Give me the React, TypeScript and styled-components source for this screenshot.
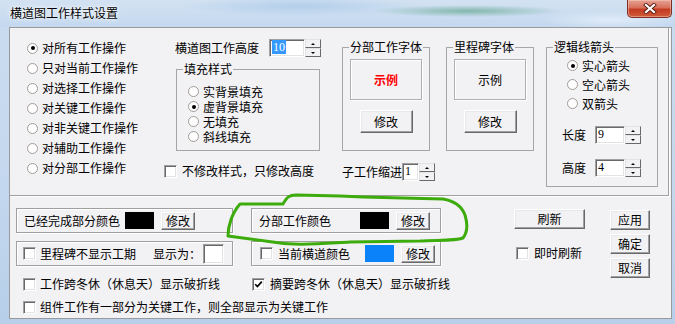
import styled, { createGlobalStyle } from "styled-components";

const GlobalStyle = createGlobalStyle`
  html, body {
    margin: 0;
    padding: 0;
  }
  body {
    font-family: "Noto Sans CJK SC", "Liberation Sans", sans-serif;
    font-size: 12px;
    color: #000;
  }
`;

const FACE = "#f2f1f4";

const Radio = ({ label, on, h = 20 }: { label: string; on?: boolean; h?: number }) => (
  <RadioRow $h={h}>
    <RadioDot $on={on} />
    <Text>{label}</Text>
  </RadioRow>
);

const Check = ({ label, on, gap = 4 }: { label: string; on?: boolean; gap?: number }) => (
  <CheckItem $gap={gap}>
    <CheckBox>
      {on && (
        <svg width="11" height="11" viewBox="0 0 11 11">
          <path d="M2.2 5.2 L4.4 7.6 L8.8 2.6" fill="none" stroke="#000" strokeWidth="1.7" />
        </svg>
      )}
    </CheckBox>
    <Text>{label}</Text>
  </CheckItem>
);

const SpinEdit = ({ value, w, selected }: { value: string; w: number; selected?: boolean }) => (
  <SpinWrap>
    <EditBox $w={w}>{selected ? <Selected>{value}</Selected> : value}</EditBox>
    <SpinCol>
      <SpinBtn $up />
      <SpinBtn />
    </SpinCol>
  </SpinWrap>
);

const ColorBox = ({ label, color, w, pad = 7, check }: { label: string; color: string; w: number; pad?: number; check?: boolean }) => (
  <Etched $w={w} $pad={pad}>
    {check && <CheckBox style={{ marginRight: 5 }} />}
    <Text style={{ width: check ? 82 : 96 }}>{label}</Text>
    <Swatch $color={color} />
    <Btn $w={34} $h={18} style={{ marginLeft: 7 }}>修改</Btn>
  </Etched>
);

const App = () => {
  return (
    <>
      <GlobalStyle />
      <Window>
        <TitleBar>
          <Title>横道图工作样式设置</Title>
          <CloseButton>
            <svg width="14" height="11" viewBox="0 0 14 11">
              <path d="M3 2 L11 9 M11 2 L3 9" stroke="#5a1e14" strokeWidth="4" strokeLinecap="square" />
              <path d="M3 2 L11 9 M11 2 L3 9" stroke="#fff" strokeWidth="2.2" strokeLinecap="square" />
            </svg>
          </CloseButton>
        </TitleBar>
        <Middle>
          <SideFrame />
          <Client>
            <UpperPanel>
              <RadioList>
                <Radio label="对所有工作操作" on />
                <Radio label="只对当前工作操作" />
                <Radio label="对选择工作操作" />
                <Radio label="对关键工作操作" />
                <Radio label="对非关键工作操作" />
                <Radio label="对辅助工作操作" />
                <Radio label="对分部工作操作" />
              </RadioList>

              <Column $w={156} $ml={0}>
                <FieldRow $pl={11}>
                  <Text style={{ width: 94 }}>横道图工作高度</Text>
                  <SpinEdit value="10" w={36} selected />
                </FieldRow>
                <Group $w={144} $h={90} style={{ marginTop: 3, marginLeft: 12 }}>
                  <Legend>填充样式</Legend>
                  <GroupBody $pt={7} $pl={11}>
                    <Radio label="实背景填充" h={15} />
                    <Radio label="虚背景填充" h={15} on />
                    <Radio label="无填充" h={15} />
                    <Radio label="斜线填充" h={15} />
                  </GroupBody>
                </Group>
                <FieldRow style={{ marginTop: 10 }}>
                  <Check label="不修改样式，只修改高度" gap={5} />
                </FieldRow>
              </Column>

              <Column $w={94} $ml={22} $pt={11}>
                <Group $w={88} $h={112}>
                  <Legend>分部工作字体</Legend>
                  <FontBody>
                    <Preview $red>示例</Preview>
                    <Btn $w={53} $h={23} style={{ marginTop: 10 }}>修改</Btn>
                  </FontBody>
                </Group>
                <FieldRow style={{ marginTop: 11 }}>
                  <Text style={{ width: 60 }}>子工作缩进</Text>
                  <SpinEdit value="1" w={17} />
                </FieldRow>
              </Column>

              <Column $w={88} $ml={10} $pt={11}>
                <Group $w={88} $h={112}>
                  <Legend>里程碑字体</Legend>
                  <FontBody>
                    <Preview>示例</Preview>
                    <Btn $w={53} $h={23} style={{ marginTop: 10 }}>修改</Btn>
                  </FontBody>
                </Group>
              </Column>

              <Column $w={112} $ml={12} $pt={11}>
                <Group $w={112} $h={148}>
                  <Legend>逻辑线箭头</Legend>
                  <GroupBody $pt={1} $pl={20}>
                    <Radio label="实心箭头" h={19} on />
                    <Radio label="空心箭头" h={19} />
                    <Radio label="双箭头" h={19} />
                  </GroupBody>
                  <GroupBody $pt={12} $pl={15}>
                    <FieldRow>
                      <Text style={{ width: 33 }}>长度</Text>
                      <SpinEdit value="9" w={30} />
                    </FieldRow>
                    <FieldRow style={{ marginTop: 13 }}>
                      <Text style={{ width: 33 }}>高度</Text>
                      <SpinEdit value="4" w={30} />
                    </FieldRow>
                  </GroupBody>
                </Group>
              </Column>
            </UpperPanel>

            <Lower>
              <LeftArea>
                <BoxRow>
                  <ColorBox label="已经完成部分颜色" color="#000" w={217} />
                  <ColorBox label="分部工作颜色" color="#000" w={190} />
                </BoxRow>
                <BoxRow style={{ marginTop: 8 }}>
                  <Etched $w={217} $pad={6}>
                    <Check label="里程碑不显示工期" />
                    <Text style={{ marginLeft: 17, width: 50 }}>显示为：</Text>
                    <EditBox $w={21} $h={20} />
                  </Etched>
                  <ColorBox label="当前横道颜色" color="#0a82fa" w={190} pad={8} check />
                </BoxRow>
                <PlainRow style={{ marginTop: 8 }}>
                  <CheckSlot $w={229}>
                    <Check label="工作跨冬休（休息天）显示破折线" />
                  </CheckSlot>
                  <Check label="摘要跨冬休（休息天）显示破折线" on gap={5} />
                </PlainRow>
                <PlainRow style={{ marginTop: 3 }}>
                  <CheckSlot $w={400}>
                    <Check label="组件工作有一部分为关键工作，则全部显示为关键工作" />
                  </CheckSlot>
                </PlainRow>
              </LeftArea>
              <RefreshCol>
                <Btn $w={71} $h={20}>刷新</Btn>
                <PlainRow style={{ marginTop: 14, paddingLeft: 2 }}>
                  <Check label="即时刷新" gap={5} />
                </PlainRow>
              </RefreshCol>
              <ButtonCol>
                <Btn $w={40} $h={20}>应用</Btn>
                <Btn $w={40} $h={20}>确定</Btn>
                <Btn $w={40} $h={20}>取消</Btn>
              </ButtonCol>
            </Lower>
          </Client>
        </Middle>

        <Annotation width="675" height="324" viewBox="0 0 675 324">
          <path
            d="M240 204 L283 204 C287 197 289 195 296 195 L340 196 L363 197 L443 199 C455 201 462 207 465 215 C468 225 467 233 463 238 C455 241 440 240 420 241 L350 242 C330 243 300 246 280 243 L228 236 C228 226 232 213 240 204 Z"
            fill="none"
            stroke="#3cab0c"
            strokeWidth="3"
            strokeLinejoin="round"
          />
        </Annotation>
      </Window>
    </>
  );
};

export default App;

const Window = styled.div`
  position: relative;
  width: 675px;
  height: 324px;
  overflow: hidden;
  display: flex;
  flex-direction: column;
  background: linear-gradient(180deg, #cadcef 0%, #c3d7ee 60%, #b7cfe9 100%);
`;

const TitleBar = styled.div`
  height: 27px;
  flex-shrink: 0;
  display: flex;
  align-items: flex-start;
  background:
    radial-gradient(ellipse 95px 6px at 468px 11px, rgba(70, 150, 115, 0.55), transparent),
    radial-gradient(ellipse 70px 9px at 610px 20px, rgba(235, 243, 252, 0.7), transparent),
    radial-gradient(ellipse 120px 10px at 300px 6px, rgba(160, 195, 230, 0.6), transparent),
    linear-gradient(180deg, #d3e2f2 0%, #c3d8ef 100%);
`;

const Title = styled.div`
  margin: 6px 0 0 10px;
  font-size: 12px;
  line-height: 14px;
  white-space: nowrap;
  text-shadow: 0 0 6px #fff, 0 0 3px #fff;
`;

const CloseButton = styled.div`
  margin-left: auto;
  margin-right: 3px;
  width: 45px;
  height: 18px;
  box-sizing: border-box;
  display: flex;
  align-items: center;
  justify-content: center;
  border: 1px solid #7d3024;
  border-top: none;
  border-radius: 0 0 5px 5px;
  background: linear-gradient(180deg, #e6a394 0%, #d7705b 45%, #c43b22 55%, #cf5a3a 100%);
  box-shadow: inset 0 0 0 1px rgba(255, 210, 200, 0.45);
`;

const Middle = styled.div`
  display: flex;
  height: 292px;
`;

const SideFrame = styled.div`
  width: 9px;
  flex-shrink: 0;
`;

const Client = styled.div`
  width: 663px;
  height: 292px;
  box-sizing: border-box;
  border: 1px solid #9a9a9c;
  background: ${FACE};
  display: flex;
  flex-direction: column;
`;

const UpperPanel = styled.div`
  width: 659px;
  height: 168px;
  flex-shrink: 0;
  box-sizing: border-box;
  border-right: 1px solid #a0a0a0;
  border-bottom: 1px solid #a0a0a0;
  box-shadow: 1px 1px 0 #fff;
  display: flex;
  align-items: flex-start;
`;

const RadioList = styled.div`
  width: 137px;
  margin-left: 17px;
  padding-top: 10px;
  flex-shrink: 0;
`;

const Column = styled.div<{ $w: number; $ml: number; $pt?: number }>`
  width: ${(p) => p.$w}px;
  margin-left: ${(p) => p.$ml}px;
  padding-top: ${(p) => p.$pt ?? 10}px;
  flex-shrink: 0;
  display: flex;
  flex-direction: column;
  align-items: flex-start;
`;

const Text = styled.span`
  display: inline-block;
  font-size: 12px;
  line-height: 14px;
  white-space: nowrap;
  flex-shrink: 0;
`;

const RadioRow = styled.div<{ $h: number }>`
  height: ${(p) => p.$h}px;
  display: flex;
  align-items: center;
  gap: 4px;
`;

const RadioDot = styled.span<{ $on?: boolean }>`
  width: 11px;
  height: 11px;
  box-sizing: border-box;
  border-radius: 50%;
  border: 1px solid #a29c96;
  background: #fff;
  display: flex;
  align-items: center;
  justify-content: center;
  flex-shrink: 0;

  &::after {
    content: "";
    width: 4px;
    height: 4px;
    border-radius: 50%;
    background: ${(p) => (p.$on ? "#000" : "transparent")};
  }
`;

const CheckItem = styled.div<{ $gap: number }>`
  display: flex;
  align-items: center;
  gap: ${(p) => p.$gap}px;
`;

const CheckBox = styled.span`
  width: 13px;
  height: 13px;
  box-sizing: border-box;
  flex-shrink: 0;
  background: #fff;
  border: 1px solid;
  border-color: #a0a0a0 #fff #fff #a0a0a0;
  box-shadow: inset 1px 1px 0 #696969, inset -1px -1px 0 #e3e3e3;
  display: flex;
  align-items: center;
  justify-content: center;
`;

const FieldRow = styled.div<{ $pl?: number }>`
  height: 20px;
  display: flex;
  align-items: center;
  padding-left: ${(p) => p.$pl ?? 0}px;
`;

const SpinWrap = styled.div`
  display: flex;
  height: 18px;
`;

const EditBox = styled.div<{ $w: number; $h?: number }>`
  width: ${(p) => p.$w}px;
  height: ${(p) => p.$h ?? 18}px;
  box-sizing: border-box;
  background: #fff;
  border: 1px solid;
  border-color: #a0a0a0 #fff #fff #a0a0a0;
  box-shadow: inset 1px 1px 0 #696969, inset -1px -1px 0 #e3e3e3;
  padding-left: 2px;
  font-family: "Liberation Serif", serif;
  font-size: 12px;
  line-height: 15px;
  flex-shrink: 0;
`;

const Selected = styled.span`
  background: #3399ff;
  color: #fff;
  padding: 0 1px;
`;

const SpinCol = styled.div`
  width: 16px;
  display: flex;
  flex-direction: column;
`;

const SpinBtn = styled.div<{ $up?: boolean }>`
  flex: 1;
  box-sizing: border-box;
  background: ${FACE};
  border: 1px solid;
  border-color: #e3e3e3 #696969 #696969 #e3e3e3;
  display: flex;
  align-items: center;
  justify-content: center;

  &::after {
    content: "";
    width: 0;
    height: 0;
    border-left: 2px solid transparent;
    border-right: 2px solid transparent;
    ${(p) => (p.$up ? "border-bottom: 2px solid #000;" : "border-top: 2px solid #000;")}
  }
`;

const Group = styled.fieldset<{ $w: number; $h: number }>`
  margin: 0;
  padding: 0;
  min-width: 0;
  width: ${(p) => p.$w}px;
  height: ${(p) => p.$h}px;
  box-sizing: border-box;
  border: 1px solid #a6a6a6;
  flex-shrink: 0;
`;

const Legend = styled.legend`
  margin-left: 6px;
  padding: 0 1px;
  font-size: 12px;
  line-height: 16px;
  white-space: nowrap;
`;

const GroupBody = styled.div<{ $pt: number; $pl: number }>`
  padding-top: ${(p) => p.$pt}px;
  padding-left: ${(p) => p.$pl}px;
`;

const FontBody = styled.div`
  display: flex;
  flex-direction: column;
  align-items: center;
  padding-top: 4px;
`;

const Preview = styled.div<{ $red?: boolean }>`
  width: 72px;
  height: 41px;
  box-sizing: border-box;
  border: 1px solid #b0b0b0;
  box-shadow: inset 1px 1px 0 #fff, 1px 1px 0 #fff;
  display: flex;
  align-items: center;
  justify-content: center;
  font-size: 12px;
  color: ${(p) => (p.$red ? "#ff0000" : "#000")};
  font-weight: ${(p) => (p.$red ? 700 : 400)};
`;

const Btn = styled.div<{ $w: number; $h: number }>`
  width: ${(p) => p.$w}px;
  height: ${(p) => p.$h}px;
  box-sizing: border-box;
  flex-shrink: 0;
  background: ${FACE};
  border: 1px solid;
  border-color: #fff #696969 #696969 #fff;
  box-shadow: inset -1px -1px 0 #a0a0a0, inset 1px 1px 0 #e8e8e8;
  display: flex;
  align-items: center;
  justify-content: center;
  font-size: 12px;
  line-height: 14px;
`;

const Lower = styled.div`
  display: flex;
  align-items: flex-start;
  padding: 12px 0 0 6px;
`;

const LeftArea = styled.div`
  width: 498px;
  flex-shrink: 0;
  display: flex;
  flex-direction: column;
`;

const BoxRow = styled.div`
  display: flex;
  gap: 18px;
`;

const Etched = styled.div<{ $w: number; $pad: number }>`
  width: ${(p) => p.$w}px;
  height: 25px;
  box-sizing: border-box;
  border: 1px solid #a0a0a0;
  box-shadow: inset 1px 1px 0 #fff, 1px 1px 0 #fff;
  display: flex;
  align-items: center;
  padding-left: ${(p) => p.$pad}px;
`;

const Swatch = styled.div<{ $color: string }>`
  width: 29px;
  height: 17px;
  flex-shrink: 0;
  margin-left: 5px;
  background: ${(p) => p.$color};
`;

const PlainRow = styled.div`
  height: 20px;
  display: flex;
  align-items: center;
  padding-left: 7px;
`;

const CheckSlot = styled.div<{ $w: number }>`
  width: ${(p) => p.$w}px;
  flex-shrink: 0;
`;

const RefreshCol = styled.div`
  width: 71px;
  padding-top: 1px;
  flex-shrink: 0;
  display: flex;
  flex-direction: column;
`;

const ButtonCol = styled.div`
  margin-left: 25px;
  padding-top: 2px;
  display: flex;
  flex-direction: column;
  gap: 4px;
`;

const Annotation = styled.svg`
  position: absolute;
  left: 0;
  top: 0;
  pointer-events: none;
`;
